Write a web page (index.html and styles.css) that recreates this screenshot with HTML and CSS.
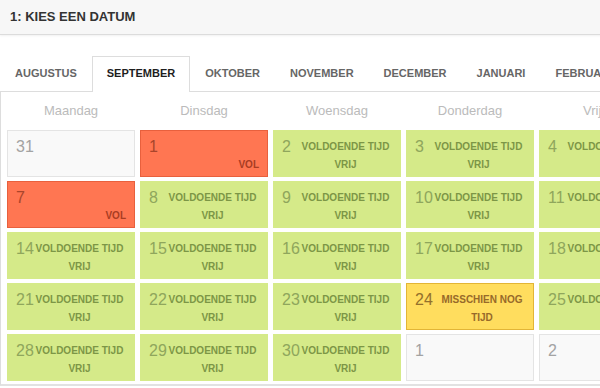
FILE: index.html
```html
<!DOCTYPE html>
<html lang="nl">
<head>
<meta charset="utf-8">
<title>Kies een datum</title>
<link rel="stylesheet" href="styles.css">
</head>
<body>
<div class="header"><h1 class="title">1: KIES EEN DATUM</h1></div>
<ul class="tabs">
  <li class="tab">AUGUSTUS</li>
  <li class="tab tab-active">SEPTEMBER</li>
  <li class="tab">OKTOBER</li>
  <li class="tab">NOVEMBER</li>
  <li class="tab">DECEMBER</li>
  <li class="tab">JANUARI</li>
  <li class="tab">FEBRUARI</li>
  <li class="tab">MAART</li>
</ul>
<div class="panel">
  <div class="days">
    <div class="day">Maandag</div><div class="day">Dinsdag</div><div class="day">Woensdag</div><div class="day">Donderdag</div><div class="day">Vrijdag</div><div class="day">Zaterdag</div><div class="day">Zondag</div>
  </div>
  <div class="grid">
    <div class="cell empty"><span class="num">31</span></div>
    <div class="cell full"><span class="num">1</span><span class="label">VOL</span></div>
    <div class="cell free"><span class="num">2</span><span class="label">VOLDOENDE TIJD VRIJ</span></div>
    <div class="cell free"><span class="num">3</span><span class="label">VOLDOENDE TIJD VRIJ</span></div>
    <div class="cell free"><span class="num">4</span><span class="label">VOLDOENDE TIJD VRIJ</span></div>
    <div class="cell empty"><span class="num">5</span></div>
    <div class="cell empty"><span class="num">6</span></div>

    <div class="cell full"><span class="num">7</span><span class="label">VOL</span></div>
    <div class="cell free"><span class="num">8</span><span class="label">VOLDOENDE TIJD VRIJ</span></div>
    <div class="cell free"><span class="num">9</span><span class="label">VOLDOENDE TIJD VRIJ</span></div>
    <div class="cell free"><span class="num">10</span><span class="label">VOLDOENDE TIJD VRIJ</span></div>
    <div class="cell free"><span class="num">11</span><span class="label">VOLDOENDE TIJD VRIJ</span></div>
    <div class="cell empty"><span class="num">12</span></div>
    <div class="cell empty"><span class="num">13</span></div>

    <div class="cell free"><span class="num">14</span><span class="label">VOLDOENDE TIJD VRIJ</span></div>
    <div class="cell free"><span class="num">15</span><span class="label">VOLDOENDE TIJD VRIJ</span></div>
    <div class="cell free"><span class="num">16</span><span class="label">VOLDOENDE TIJD VRIJ</span></div>
    <div class="cell free"><span class="num">17</span><span class="label">VOLDOENDE TIJD VRIJ</span></div>
    <div class="cell free"><span class="num">18</span><span class="label">VOLDOENDE TIJD VRIJ</span></div>
    <div class="cell empty"><span class="num">19</span></div>
    <div class="cell empty"><span class="num">20</span></div>

    <div class="cell free"><span class="num">21</span><span class="label">VOLDOENDE TIJD VRIJ</span></div>
    <div class="cell free"><span class="num">22</span><span class="label">VOLDOENDE TIJD VRIJ</span></div>
    <div class="cell free"><span class="num">23</span><span class="label">VOLDOENDE TIJD VRIJ</span></div>
    <div class="cell maybe"><span class="num">24</span><span class="label">MISSCHIEN NOG TIJD</span></div>
    <div class="cell free"><span class="num">25</span><span class="label">VOLDOENDE TIJD VRIJ</span></div>
    <div class="cell empty"><span class="num">26</span></div>
    <div class="cell empty"><span class="num">27</span></div>

    <div class="cell free"><span class="num">28</span><span class="label">VOLDOENDE TIJD VRIJ</span></div>
    <div class="cell free"><span class="num">29</span><span class="label">VOLDOENDE TIJD VRIJ</span></div>
    <div class="cell free"><span class="num">30</span><span class="label">VOLDOENDE TIJD VRIJ</span></div>
    <div class="cell empty"><span class="num">1</span></div>
    <div class="cell empty"><span class="num">2</span></div>
    <div class="cell empty"><span class="num">3</span></div>
    <div class="cell empty"><span class="num">4</span></div>
  </div>
</div>
</body>
</html>
```
FILE: styles.css
```css
html, body {
  margin: 0;
  padding: 0;
  background: #fff;
  overflow: hidden;
}
body {
  font-family: "Liberation Sans", Arial, sans-serif;
  width: 1100px;
}
.header {
  height: 34px;
  background: #f7f7f7;
  border-bottom: 1px solid #dcdcdc;
  box-shadow: 0 1px 2px rgba(0, 0, 0, 0.06);
}
.title {
  margin: 0;
  padding-left: 10px;
  font-size: 13px;
  font-weight: bold;
  line-height: 34px;
  color: #333;
}
.tabs {
  list-style: none;
  margin: 21px 0 0 0;
  padding: 0;
  display: flex;
  border-bottom: 1px solid #ddd;
}
.tab {
  padding: 0 14px 1px 14px;
  border: 1px solid transparent;
  border-bottom: none;
  line-height: 33px;
  font-size: 11px;
  font-weight: bold;
  color: #666;
  white-space: nowrap;
}
.tab-active {
  border-color: #ddd;
  background: #fff;
  color: #1e1e1e;
  margin-bottom: -1px;
  padding-bottom: 2px;
}
.panel {
  width: 940px;
  border-left: 1px solid #ddd;
  border-bottom: 2px solid #e2e2e2;
  padding: 0 6px 3px 6px;
}
.days {
  display: grid;
  grid-template-columns: repeat(7, 128px);
  column-gap: 5px;
  height: 38px;
}
.day {
  text-align: center;
  font-size: 13px;
  line-height: 38px;
  color: #bbb;
}
.grid {
  display: grid;
  grid-template-columns: repeat(7, 128px);
  grid-auto-rows: 47px;
  column-gap: 5px;
  row-gap: 4px;
}
.cell {
  box-sizing: border-box;
  border: 1px solid transparent;
  padding: 7px 8px;
  display: grid;
  grid-template-columns: 1fr;
  align-items: start;
}
.num, .label {
  grid-area: 1 / 1;
}
.num {
  font-size: 16px;
  line-height: 18px;
}
.label {
  margin-left: 17px;
  font-size: 10px;
  font-weight: bold;
  line-height: 18px;
  text-align: center;
}
.empty {
  background: #f9f9f9;
  border-color: #e4e4e4;
}
.empty .num { color: #a3a3a3; }
.free {
  background: #d5ea89;
  border-color: #d5ea89;
}
.free .num { color: #8fa65c; }
.free .label { color: #7c9646; }
.full {
  background: #ff7652;
  border-color: #e8603d;
}
.full .num { color: #a9452b; }
.full .label {
  color: #a93d22;
  text-align: right;
  padding-top: 18px;
}
.maybe {
  background: #ffdd5e;
  border-color: #e2b536;
}
.maybe .num { color: #93702b; }
.maybe .label {
  color: #976a2a;
  margin-left: 24px;
}
```
